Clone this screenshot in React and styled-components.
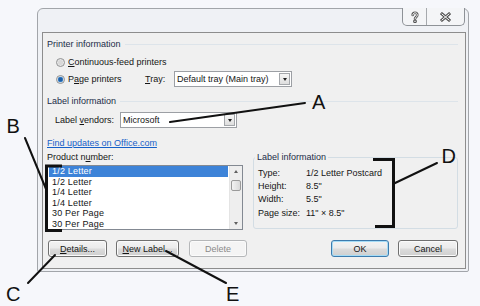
import { Fragment } from "react";
import styled, { createGlobalStyle } from "styled-components";

const GlobalStyle = createGlobalStyle`
  html, body { margin: 0; padding: 0; background: #f6f7fb; }
  body { font-family: "Liberation Sans", Arial, sans-serif; }
`;

const Page = styled.div`
  position: relative;
  width: 480px;
  height: 306px;
  box-sizing: border-box;
  padding: 8px 0 0 37px;
  background: #f6f7fb;
  overflow: hidden;
`;

const Dialog = styled.div`
  width: 432px;
  height: 264px;
  box-sizing: border-box;
  border: 1px solid #a2a5aa;
  border-radius: 6px 6px 2px 2px;
  background: #eff1f5;
  display: flex;
  flex-direction: column;
  padding: 0 2px 2px 4px;
`;

const TitleBar = styled.div`
  height: 23px;
  flex: none;
  display: flex;
  justify-content: flex-end;
  align-items: flex-start;
  padding-right: 1px;
`;

const TitleButtons = styled.div`
  display: flex;
  margin-top: -1px;
  height: 17px;
  border: 1px solid #8e9297;
  border-top: none;
  border-radius: 0 0 5px 5px;
  background: #f4f5f7;
  overflow: hidden;
`;

const TitleButton = styled.div`
  width: ${(p) => p.$w}px;
  display: flex;
  align-items: center;
  justify-content: center;
  & + & {
    border-left: 1px solid #a6a9ad;
  }
`;

const Client = styled.div`
  flex: 1;
  border: 1px solid #8d8d8d;
  background: #f0f0f0;
  display: flex;
  flex-direction: column;
  padding: 0 7px 0 4px;
  font-size: 9px;
  color: #151515;
`;

const GroupHeader = styled.div`
  display: flex;
  align-items: center;
  height: 12px;
  margin-top: ${(p) => p.$top}px;
  color: #1c2c48;
  &::after {
    content: "";
    flex: 1;
    height: 1px;
    margin-left: 4px;
    background: #dde4ea;
  }
`;

const Row = styled.div`
  display: flex;
  align-items: center;
  height: ${(p) => p.$h}px;
  margin-top: ${(p) => p.$top}px;
  padding-left: ${(p) => p.$indent || 0}px;
`;

const RadioItem = styled.label`
  display: flex;
  align-items: center;
  gap: 3px;
  width: ${(p) => (p.$w ? `${p.$w}px` : "auto")};
`;

const Radio = styled.span`
  width: 9px;
  height: 9px;
  box-sizing: border-box;
  border-radius: 50%;
  border: 1px solid #8f9091;
  background: ${(p) =>
    p.$checked
      ? "radial-gradient(circle, #1f5fa6 0 1.6px, #4f97d8 2.6px, #e6e6e6 3.1px, #fafafa 4px)"
      : "radial-gradient(circle, #d8d8d8 0 2px, #f4f4f4 4px)"};
`;

const U = styled.span`
  text-decoration: underline;
`;

const FieldLabel = styled.span`
  width: ${(p) => p.$w}px;
  flex: none;
`;

const Combo = styled.div`
  width: ${(p) => p.$w}px;
  height: 16px;
  box-sizing: border-box;
  border: 1px solid #9c9fa4;
  background: #fff;
  display: flex;
  align-items: center;
  padding: 1px 1px 1px 2px;
`;

const ComboText = styled.span`
  flex: 1;
  white-space: nowrap;
  overflow: hidden;
`;

const ComboButton = styled.span`
  width: 11px;
  height: 12px;
  box-sizing: border-box;
  border: 1px solid #a4a7ab;
  background: linear-gradient(#f6f6f6, #dedede);
  display: flex;
  align-items: center;
  justify-content: center;
  &::after {
    content: "";
    border-left: 2.5px solid transparent;
    border-right: 2.5px solid transparent;
    border-top: 3px solid #222;
  }
`;

const Link = styled.a`
  height: 12px;
  line-height: 12px;
  margin-top: 9px;
  color: #1560c8;
  text-decoration: underline;
  align-self: flex-start;
`;

const Columns = styled.div`
  display: flex;
  gap: 10px;
  margin-top: 2px;
  height: 79px;
`;

const LeftColumn = styled.div`
  width: 196px;
  display: flex;
  flex-direction: column;
`;

const ColumnLabel = styled.div`
  height: 12px;
  line-height: 12px;
  margin-bottom: 2px;
`;

const ListBox = styled.div`
  height: 65px;
  box-sizing: border-box;
  border: 1px solid #838992;
  background: #fff;
  display: flex;
  overflow: hidden;
`;

const ListItems = styled.div`
  flex: 1;
  padding: 0 1px;
`;

const ListItem = styled.div`
  height: 10.5px;
  line-height: 10.5px;
  padding-left: 3px;
  white-space: nowrap;
  letter-spacing: 0.2px;
  background: ${(p) => (p.$selected ? "#3d83d8" : "transparent")};
  color: ${(p) => (p.$selected ? "#fff" : "#151515")};
`;

const ScrollBar = styled.div`
  width: 12px;
  display: flex;
  flex-direction: column;
  background: #eeeeee;
  border-left: 1px solid #e4e4e4;
`;

const ScrollArrow = styled.div`
  height: 11px;
  display: flex;
  align-items: center;
  justify-content: center;
  &::after {
    content: "";
    border-left: 2.5px solid transparent;
    border-right: 2.5px solid transparent;
    ${(p) => (p.$up ? "border-bottom" : "border-top")}: 3px solid #606060;
  }
`;

const ScrollTrack = styled.div`
  flex: 1;
  padding: 3px 1px 0;
`;

const ScrollThumb = styled.div`
  height: 11px;
  box-sizing: border-box;
  border: 1px solid #9a9a9a;
  border-radius: 2px;
  background: linear-gradient(90deg, #f2f2f2, #d9d9d9);
`;

const InfoBox = styled.fieldset`
  margin: 0;
  width: 205px;
  height: 78px;
  box-sizing: border-box;
  padding: 3.4px 4px 0 4px;
  border: 1px solid #d3dde4;
  border-radius: 3px;
`;

const InfoLegend = styled.legend`
  padding: 0 2px;
  margin-left: -3px;
  height: 12px;
  line-height: 12px;
  color: #1c2c48;
`;

const InfoGrid = styled.div`
  display: grid;
  grid-template-columns: 48px 1fr;
  grid-auto-rows: 13.2px;
  align-items: center;
`;

const ButtonRow = styled.div`
  display: flex;
  align-items: center;
  margin-top: 10px;
  height: 17px;
  padding-left: 1px;
`;

const Button = styled.button`
  width: ${(p) => p.$w}px;
  height: 17px;
  margin-left: ${(p) => p.$ml || 0}px;
  padding: 0;
  box-sizing: border-box;
  font: inherit;
  font-size: 9px;
  border-radius: 3px;
  border: 1px solid ${(p) => (p.$default ? "#3d7bad" : p.disabled ? "#b5b7b9" : "#707070")};
  color: ${(p) => (p.disabled ? "#8a8a8a" : "#151515")};
  background: ${(p) =>
    p.disabled
      ? "#f4f4f4"
      : "linear-gradient(#f3f3f3 0, #ebebeb 48%, #dcdcdc 52%, #cfcfcf 100%)"};
  box-shadow: ${(p) => (p.$default ? "inset 0 0 0 1px #a6dcf6" : "inset 0 0 0 1px #fbfbfb")};
`;

const Spacer = styled.div`
  flex: 1;
`;

const Overlay = styled.svg`
  position: absolute;
  left: 0;
  top: 0;
  pointer-events: none;
`;

const Letter = styled.span`
  position: absolute;
  left: ${(p) => p.$x}px;
  top: ${(p) => p.$y}px;
  font-family: "Liberation Sans", Arial, sans-serif;
  font-size: 20px;
  line-height: 20px;
  color: #111;
`;

const HelpGlyph = () => (
  <svg width="10" height="12" viewBox="-5 -6 10 12">
    <g fill="none" strokeLinecap="round">
      <path d="M-2.3 -2 C-2.3 -5 2.3 -5 2.3 -2 C2.3 0 0 0 0 2" stroke="#555" strokeWidth="2.6" />
      <circle cx="0" cy="4.3" r="0.6" stroke="#555" strokeWidth="2.6" />
      <path d="M-2.3 -2 C-2.3 -5 2.3 -5 2.3 -2 C2.3 0 0 0 0 2" stroke="#fff" strokeWidth="0.9" />
      <circle cx="0" cy="4.3" r="0.4" fill="#fff" />
    </g>
  </svg>
);

const CloseGlyph = () => (
  <svg width="11" height="10" viewBox="-5.5 -5 11 10">
    <g strokeLinecap="square">
      <path d="M-3.5 -3 L3.5 3 M3.5 -3 L-3.5 3" stroke="#555" strokeWidth="3" />
      <path d="M-3.5 -3 L3.5 3 M3.5 -3 L-3.5 3" stroke="#fff" strokeWidth="1" />
    </g>
  </svg>
);

const products = ["1/2 Letter", "1/2 Letter", "1/4 Letter", "1/4 Letter", "30 Per Page", "30 Per Page"];

const info = [
  ["Type:", "1/2 Letter Postcard"],
  ["Height:", "8.5\""],
  ["Width:", "5.5\""],
  ["Page size:", "11\" \u00d7 8.5\""],
];

export default function App() {
  return (
    <>
      <GlobalStyle />
      <Page>
        <Dialog>
          <TitleBar>
            <TitleButtons>
              <TitleButton $w={23}>
                <HelpGlyph />
              </TitleButton>
              <TitleButton $w={37}>
                <CloseGlyph />
              </TitleButton>
            </TitleButtons>
          </TitleBar>
          <Client>
            <GroupHeader $top={5}>Printer information</GroupHeader>
            <Row $h={12} $top={6} $indent={9}>
              <RadioItem>
                <Radio />
                <span>
                  <U>C</U>ontinuous-feed printers
                </span>
              </RadioItem>
            </Row>
            <Row $h={16} $top={3} $indent={9}>
              <RadioItem $w={89}>
                <Radio $checked />
                <span>
                  P<U>a</U>ge printers
                </span>
              </RadioItem>
              <FieldLabel $w={29}>
                <U>T</U>ray:
              </FieldLabel>
              <Combo $w={118}>
                <ComboText>Default tray (Main tray)</ComboText>
                <ComboButton />
              </Combo>
            </Row>
            <GroupHeader $top={8}>Label information</GroupHeader>
            <Row $h={16} $top={5} $indent={8}>
              <FieldLabel $w={65}>
                Label <U>v</U>endors:
              </FieldLabel>
              <Combo $w={117}>
                <ComboText>Microsoft</ComboText>
                <ComboButton />
              </Combo>
            </Row>
            <Link>Find updates on Office.com</Link>
            <Columns>
              <LeftColumn>
                <ColumnLabel>
                  Product n<U>u</U>mber:
                </ColumnLabel>
                <ListBox>
                  <ListItems>
                    {products.map((p, i) => (
                      <ListItem key={i} $selected={i === 0}>
                        {p}
                      </ListItem>
                    ))}
                  </ListItems>
                  <ScrollBar>
                    <ScrollArrow $up />
                    <ScrollTrack>
                      <ScrollThumb />
                    </ScrollTrack>
                    <ScrollArrow />
                  </ScrollBar>
                </ListBox>
              </LeftColumn>
              <InfoBox>
                <InfoLegend>Label information</InfoLegend>
                <InfoGrid>
                  {info.map(([k, v]) => (
                    <Fragment key={k}>
                      <span>{k}</span>
                      <span>{v}</span>
                    </Fragment>
                  ))}
                </InfoGrid>
              </InfoBox>
            </Columns>
            <ButtonRow>
              <Button $w={59}>
                <U>D</U>etails...
              </Button>
              <Button $w={63} $ml={9}>
                <U>N</U>ew Label...
              </Button>
              <Button $w={58} $ml={10} disabled>
                Delete
              </Button>
              <Spacer />
              <Button $w={58} $default>
                OK
              </Button>
              <Button $w={60} $ml={9}>
                Cancel
              </Button>
            </ButtonRow>
          </Client>
        </Dialog>

        <Overlay width="480" height="306" viewBox="0 0 480 306">
          <g stroke="#111" fill="none" strokeLinecap="round">
            <line x1="170" y1="122" x2="305" y2="103" strokeWidth="2" />
            <line x1="25" y1="138" x2="46" y2="189" strokeWidth="2" />
            <path d="M62 166 H46.5 V230.5 H62" strokeWidth="3" strokeLinecap="butt" />
            <line x1="28" y1="283" x2="55" y2="255" strokeWidth="2" />
            <path d="M373 159.5 H393.5 V226.5 H375" strokeWidth="3" strokeLinecap="butt" />
            <line x1="393" y1="184" x2="437" y2="163" strokeWidth="2" />
            <line x1="226" y1="283" x2="166" y2="251" strokeWidth="2" />
          </g>
        </Overlay>
        <Letter $x={312} $y={91.5}>A</Letter>
        <Letter $x={6.5} $y={115.5}>B</Letter>
        <Letter $x={6} $y={283.5}>C</Letter>
        <Letter $x={441.5} $y={145.5}>D</Letter>
        <Letter $x={226} $y={283.5}>E</Letter>
      </Page>
    </>
  );
}
